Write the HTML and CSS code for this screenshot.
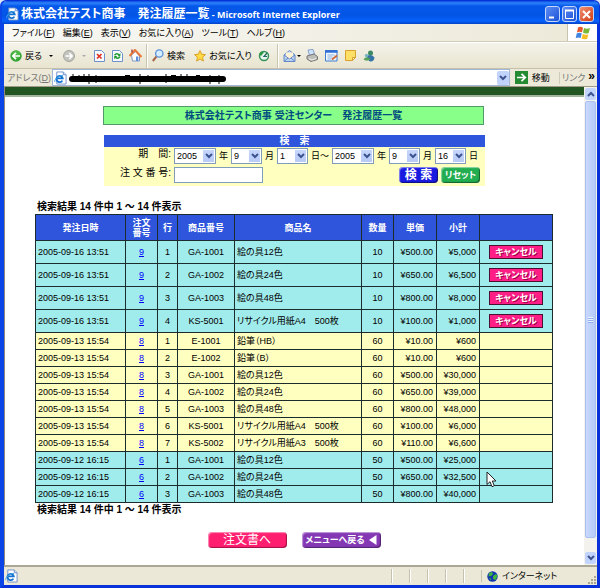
FILE: index.html
```html
<!DOCTYPE html>
<html lang="ja">
<head>
<meta charset="utf-8">
<meta name="viewport" content="width=device-width, initial-scale=1">
<title>株式会社テスト商事　発注履歴一覧</title>
<link rel="stylesheet" href="styles.css">
</head>
<body>
<svg width="0" height="0" class="defs" aria-hidden="true">
  <symbol id="ie" viewBox="0 0 14 14"><path d="M3 .5h7l3 3v10H3z" fill="#fff" stroke="#6f8fc8"/><path d="M10 .5v3h3" fill="#cfe0ff" stroke="#6f8fc8"/><path d="M9 9.8A3.4 3.4 0 1 1 9.4 7.4H3.2" fill="none" stroke="#1672cf" stroke-width="2"/><path d="M1 11.5C-.5 9 5 4 9.8 4.2" fill="none" stroke="#43a5ef"/></symbol>
  <symbol id="down" viewBox="0 0 8 6"><path d="M1 1l3 3 3-3" fill="none" stroke="#3c5390" stroke-width="2"/></symbol>
</svg>
<div class="window">
  <header class="titlebar">
    <svg class="icon" width="13" height="14"><use href="#ie"/></svg>
    <h1>株式会社テスト商事　発注履歴一覧<span> - Microsoft Internet Explorer</span></h1>
    <div class="winbtns">
      <button aria-label="最小化"><svg width="13" height="13" viewBox="0 0 13 13"><path d="M3 9.5h5" stroke="#fff" stroke-width="2"/></svg></button>
      <button aria-label="最大化"><svg width="13" height="13" viewBox="0 0 13 13"><path d="M2.500 2v8.500h8V2" fill="none" stroke="#fff"/><path d="M2 2.500h9" stroke="#fff" stroke-width="2"/></svg></button>
      <button class="close" aria-label="閉じる"><svg width="13" height="13" viewBox="0 0 13 13"><path d="M3 3l7 7M10 3l-7 7" stroke="#fff" stroke-width="2"/></svg></button>
    </div>
  </header>

  <div class="menubar">
    <nav>
      <a href="#">ファイル(<u>F</u>)</a><a href="#">編集(<u>E</u>)</a><a href="#">表示(<u>V</u>)</a><a href="#">お気に入り(<u>A</u>)</a><a href="#">ツール(<u>T</u>)</a><a href="#">ヘルプ(<u>H</u>)</a>
    </nav>
    <div class="flagbox"><svg width="16" height="14" viewBox="0 0 16 14"><path d="M3 1.500Q5.500 0 8 1.700L7 6.300Q4.500 5 2 6.500z" fill="#e8562b"/><path d="M9 2q3 1.500 6 0l-1.300 5q-3 1.300-5.700-.2z" fill="#78b938"/><path d="M1.700 7.500q2.500-1.500 5-.2L5.700 12q-2.500-1.300-5 .2z" fill="#3f84e0"/><path d="M7.700 8q2.700 1.500 5.700.2l-1.200 4.600q-3 1.200-5.600-.3z" fill="#f7be24"/></svg></div>
  </div>

  <div class="toolbar">
    <button><svg width="12" height="12" viewBox="0 0 12 12"><circle cx="6" cy="6" r="5.700" fill="#35a535"/><circle cx="6" cy="4.500" r="4" fill="#62c552" opacity=".6"/><path d="M10 6H3M6 2.800L2.800 6 6 9.200" fill="none" stroke="#fff" stroke-width="1.700"/></svg>戻る</button>
    <span class="caret"></span>
    <button aria-label="進む" class="fwd"><svg width="12" height="12" viewBox="0 0 12 12"><circle cx="6" cy="6" r="5.500" fill="#c4c4be" stroke="#a4a4a0"/><path d="M2.500 6H9M6.300 3L9.200 6 6.300 9" fill="none" stroke="#fff" stroke-width="1.500"/></svg></button>
    <span class="caret pale"></span>
    <div class="icons">
      <button aria-label="中止"><svg width="12" height="12" viewBox="0 0 12 12"><path d="M1.500.5h7l3 3v8h-10z" fill="#f6faff" stroke="#6d91cc"/><path d="M4 4l4.500 4.500M8.500 4L4 8.500" stroke="#e03020" stroke-width="1.700"/></svg></button>
      <button aria-label="更新"><svg width="12" height="12" viewBox="0 0 12 12"><path d="M1.500.5h7l3 3v8h-10z" fill="#f6faff" stroke="#6d91cc"/><path d="M3.500 5.200q2.500-3 4.500-.2M9 6.800q-2.500 3-4.500.2" fill="none" stroke="#1d9a2c" stroke-width="1.500"/><path d="M9.400 3v3.200H6.500zM3.200 9.200V6h3z" fill="#1d9a2c"/></svg></button>
      <button aria-label="ホーム"><svg width="13" height="13" viewBox="0 0 13 13"><path d="M2.500 6l4-3.500L10.500 7v5h-7z" fill="#fff" stroke="#7f97c0"/><path d="M7 7.500h2.300V12H7z" fill="#5d8fda"/><path d="M.5 7L6 1l6.500 7" fill="none" stroke="#e9793a" stroke-width="2"/><path d="M3 .5v3" stroke="#a44" stroke-width="1.500"/></svg></button>
    </div>
    <span class="sep"></span>
    <button><svg width="12" height="13" viewBox="0 0 12 13"><path d="M4.500 7.500L.8 12" stroke="#a5674a" stroke-width="2"/><circle cx="7.300" cy="4.500" r="3.700" fill="#d5eeff" stroke="#5b91d8" stroke-width="1.300"/></svg>検索</button>
    <button class="fav"><svg width="12" height="12" viewBox="0 0 12 12"><path d="M6 .6l1.600 3.600 3.900.4-2.900 2.600.8 3.900L6 9.100l-3.400 2 .8-3.900L.5 4.600l3.900-.4z" fill="#ffda42" stroke="#d89a20" stroke-width=".9"/></svg>お気に入り</button>
    <button aria-label="履歴" class="hist"><svg width="12" height="12" viewBox="0 0 12 12"><circle cx="6" cy="6" r="4.500" fill="#e6f5ed" stroke="#359259" stroke-width="1.500"/><path d="M1 4l2-2.500 3 1L3 6z" fill="#2c9a45"/><path d="M9 3L6 6.500h3" fill="none" stroke="#24675f" stroke-width="1.200"/></svg></button>
    <span class="sep"></span>
    <button aria-label="メール"><svg width="13" height="12" viewBox="0 0 13 12"><path d="M1 5l5.500-4.500L12 5v6.500H1z" fill="#b9d3f7" stroke="#6489c4"/><path d="M3 2.500h7v5l-3.500 2L3 7.500z" fill="#fff2d5"/><path d="M1 5l5.500 4L12 5M1 11.500L5 8M12 11.500L8 8" fill="none" stroke="#6489c4"/></svg></button>
    <span class="caret mail"></span>
    <div class="icons wide">
      <button aria-label="印刷"><svg width="12" height="13" viewBox="0 0 12 13"><path d="M2 1l5-.5L8.500 5l-5 1.500z" fill="#cfe4ff" stroke="#84a0cc"/><path d="M1 7l7-2 3.500 2.500v3L5 12.500 1 10z" fill="#bdbdb8" stroke="#777"/><path d="M3 9.500l3 1.500 4-1.500" fill="none" stroke="#f5f5f0"/></svg></button>
      <button aria-label="編集"><svg width="13" height="12" viewBox="0 0 13 12"><path d="M.5.500h11.500v10.500H.5z" fill="#eef6ff" stroke="#3e7fd0"/><path d="M0 1.500h12.500" stroke="#2f6fd6" stroke-width="2.500"/><path d="M2.500 5h7M2.500 7h5M2.500 9h4" stroke="#8eb0db"/><path d="M7 9.500l5-4" stroke="#cf6a35" stroke-width="1.800"/></svg></button>
      <button aria-label="メモ"><svg width="11" height="11" viewBox="0 0 11 11"><path d="M.5.500h10v7l-3 3h-7z" fill="#ffdf66" stroke="#d8a130"/><path d="M7.500 10.500v-3h3z" fill="#fff5bd" stroke="#d8a130"/></svg></button>
      <button aria-label="メッセンジャー"><svg width="12" height="12" viewBox="0 0 12 12"><circle cx="7.500" cy="3" r="2.500" fill="#3c8a63"/><path d="M4 6q4-2.500 7.500 1.500Q11 12 7 11.500 4 10 4 6z" fill="#3574a5"/><circle cx="3.500" cy="5.500" r="1.700" fill="#79b7c5"/><path d="M.5 9.500Q3 5.500 7.500 9 4 12 .5 9.500z" fill="#57a15d"/></svg></button>
    </div>
  </div>

  <div class="addressbar">
    <label for="addr">アドレス(<u>D</u>)</label>
    <div class="addr">
      <svg class="icon" width="13" height="14"><use href="#ie"/></svg>
      <svg class="stroke" width="160" height="12" viewBox="0 0 160 12"><path d="M4 7H155" stroke="#000" stroke-width="6" stroke-linecap="round"/><path d="M5 2v7M11 3v5M16 2v8M21 2v10M28 3v8M57 3.500h5M72 2v10M80 3v7M98 2v9M103 3.500h5M113 2v8M119 2v8M128 3.500h4M142 3v9M151 3v9" stroke="#000"/></svg>
      <input id="addr" type="text">
      <button class="drop" aria-label="履歴を開く"><svg width="8" height="6"><use href="#down"/></svg></button>
    </div>
    <button class="go"><svg width="13" height="13" viewBox="0 0 13 13"><path d="M0 0h13v13H0z" fill="#258b32"/><path d="M2 6.500h8M6.500 2.800l3.800 3.700-3.800 3.700" fill="none" stroke="#fff" stroke-width="1.700"/></svg>移動</button>
    <a class="links" href="#">リンク</a><b class="more">»</b>
  </div>

  <div class="viewport">
    <main>
      <div class="band"></div>
      <div class="page">
        <h2>株式会社テスト商事 受注センター　発注履歴一覧</h2>
        <form class="search" onsubmit="return false">
          <h3>検　索</h3>
          <div class="fields">
            <label for="y1">期　間:</label>
            <div class="dates">
              <span class="sel year"><select id="y1"><option>2005</option></select><svg><use href="#down"/></svg></span>年
              <span class="sel"><select aria-label="開始月"><option>9</option></select><svg><use href="#down"/></svg></span>月
              <span class="sel"><select aria-label="開始日"><option>1</option></select><svg><use href="#down"/></svg></span>日～
              <span class="sel year"><select aria-label="終了年"><option>2005</option></select><svg><use href="#down"/></svg></span>年
              <span class="sel"><select aria-label="終了月"><option>9</option></select><svg><use href="#down"/></svg></span>月
              <span class="sel"><select aria-label="終了日"><option>16</option></select><svg><use href="#down"/></svg></span>日
            </div>
            <label for="no">注 文 番 号:</label>
            <div class="number"><input id="no" type="text"><button class="pill blue">検 索</button><button class="pill green" type="reset">リセット</button></div>
          </div>
        </form>

        <section class="results">
          <p>検索結果 14 件中 1 ～ 14 件表示</p>
          <table>
            <colgroup><col class="w-date"><col class="w-s"><col class="w-row"><col class="w-code"><col class="w-name"><col class="w-s"><col class="w-price"><col class="w-price"><col class="w-act"></colgroup>
            <thead><tr><th>発注日時</th><th>注文<br>番号</th><th>行</th><th>商品番号</th><th>商品名</th><th>数量</th><th>単価</th><th>小計</th><th></th></tr></thead>
            <tbody class="aqua open">
              <tr><td>2005-09-16 13:51</td><td><a href="#">9</a></td><td>1</td><td>GA-1001</td><td>絵の具12色</td><td>10</td><td>¥500.00</td><td>¥5,000</td><td><button class="cancel">キャンセル</button></td></tr>
              <tr><td>2005-09-16 13:51</td><td><a href="#">9</a></td><td>2</td><td>GA-1002</td><td>絵の具24色</td><td>10</td><td>¥650.00</td><td>¥6,500</td><td><button class="cancel">キャンセル</button></td></tr>
              <tr><td>2005-09-16 13:51</td><td><a href="#">9</a></td><td>3</td><td>GA-1003</td><td>絵の具48色</td><td>10</td><td>¥800.00</td><td>¥8,000</td><td><button class="cancel">キャンセル</button></td></tr>
              <tr><td>2005-09-16 13:51</td><td><a href="#">9</a></td><td>4</td><td>KS-5001</td><td>リサイクル用紙A4　500枚</td><td>10</td><td>¥100.00</td><td>¥1,000</td><td><button class="cancel">キャンセル</button></td></tr>
            </tbody>
            <tbody class="cream">
              <tr><td>2005-09-13 15:54</td><td><a href="#">8</a></td><td>1</td><td>E-1001</td><td>鉛筆（HB）</td><td>60</td><td>¥10.00</td><td>¥600</td><td></td></tr>
              <tr><td>2005-09-13 15:54</td><td><a href="#">8</a></td><td>2</td><td>E-1002</td><td>鉛筆（B）</td><td>60</td><td>¥10.00</td><td>¥600</td><td></td></tr>
              <tr><td>2005-09-13 15:54</td><td><a href="#">8</a></td><td>3</td><td>GA-1001</td><td>絵の具12色</td><td>60</td><td>¥500.00</td><td>¥30,000</td><td></td></tr>
              <tr><td>2005-09-13 15:54</td><td><a href="#">8</a></td><td>4</td><td>GA-1002</td><td>絵の具24色</td><td>60</td><td>¥650.00</td><td>¥39,000</td><td></td></tr>
              <tr><td>2005-09-13 15:54</td><td><a href="#">8</a></td><td>5</td><td>GA-1003</td><td>絵の具48色</td><td>60</td><td>¥800.00</td><td>¥48,000</td><td></td></tr>
              <tr><td>2005-09-13 15:54</td><td><a href="#">8</a></td><td>6</td><td>KS-5001</td><td>リサイクル用紙A4　500枚</td><td>60</td><td>¥100.00</td><td>¥6,000</td><td></td></tr>
              <tr><td>2005-09-13 15:54</td><td><a href="#">8</a></td><td>7</td><td>KS-5002</td><td>リサイクル用紙A3　500枚</td><td>60</td><td>¥110.00</td><td>¥6,600</td><td></td></tr>
            </tbody>
            <tbody class="aqua">
              <tr><td>2005-09-12 16:15</td><td><a href="#">6</a></td><td>1</td><td>GA-1001</td><td>絵の具12色</td><td>50</td><td>¥500.00</td><td>¥25,000</td><td></td></tr>
              <tr><td>2005-09-12 16:15</td><td><a href="#">6</a></td><td>2</td><td>GA-1002</td><td>絵の具24色</td><td>50</td><td>¥650.00</td><td>¥32,500</td><td class="hover"><svg class="pointer" width="11" height="18" viewBox="0 0 11 18"><path d="M1 1v12.500l3-2.800 2 5 2.300-1-2-4.700H10z" fill="#fff" stroke="#222"/></svg></td></tr>
              <tr><td>2005-09-12 16:15</td><td><a href="#">6</a></td><td>3</td><td>GA-1003</td><td>絵の具48色</td><td>50</td><td>¥800.00</td><td>¥40,000</td><td></td></tr>
            </tbody>
          </table>
          <p>検索結果 14 件中 1 ～ 14 件表示</p>
        </section>
        <div class="actions"><button class="big pink">注文書へ</button><button class="big purple">メニューへ戻る<svg width="9" height="10" viewBox="0 0 9 10"><path d="M8.500 0v10L1 5z" fill="#fff"/></svg></button></div>
      </div>
    </main>
    <div class="scroll">
      <button aria-label="上へ"><svg class="flip" width="8" height="6"><use href="#down"/></svg></button>
      <div class="track"><div class="thumb"><i></i></div></div>
      <button aria-label="下へ"><svg width="8" height="6"><use href="#down"/></svg></button>
    </div>
  </div>

  <footer class="status">
    <svg class="icon" width="13" height="14"><use href="#ie"/></svg>
    <div class="cells"><i></i><i></i><i></i><i></i><i></i></div>
    <div class="zone"><svg width="11" height="11" viewBox="0 0 11 11"><circle cx="5.500" cy="5.500" r="5.200" fill="#1236b0"/><path d="M2 2l3-1 1 2-2 2-2.500.5zM6 5l3-2 1.500 2-2 4L6 8zM2 7l2 .500v2z" fill="#42b63c"/></svg>インターネット</div>
    <svg class="grip" width="9" height="9" viewBox="0 0 9 9"><path d="M7 1h2M4 4h2M7 4h2M1 7h2M4 7h2M7 7h2" stroke="#aaa58e" stroke-width="2"/></svg>
  </footer>
</div>
</body>
</html>
```

FILE: styles.css
```css
* { box-sizing: border-box; }
body {
  margin: 0;
  background: #dfe6f5;
  font: 9px/12px "Liberation Sans", "Noto Sans CJK JP", sans-serif;
  font-feature-settings: "palt";
  color: #000;
}
.defs { position: absolute; }
h1, h2, h3, p { margin: 0; font-weight: normal; }
button { font: inherit; font-feature-settings: inherit; color: inherit; border: 0; background: none; padding: 0; display: flex; align-items: center; justify-content: center; }
input, select { font: inherit; color: inherit; margin: 0; }
svg { display: block; flex: none; }
a { color: inherit; text-decoration: none; }

.window {
  min-height: 100vh;
  display: flex;
  flex-direction: column;
  border: solid #0831d9;
  border-width: 1px 3px 3px 4px;
  border-left-color: #0b45e8;
  border-radius: 6px 6px 0 0;
  background: #ece9d8;
}
.titlebar {
  height: 23px;
  margin: 0 -2px;
  padding: 3px 5px 0 4px;
  display: flex;
  align-items: center;
  gap: 2px;
  color: #fff;
  background: linear-gradient(#0a4be0, #2d83fb 2px, #0558ea 5px, #0355e6 15px, #0762fb 20px, #0343c8);
  border-radius: 5px 5px 0 0;
}
h1 { flex: 1; font-size: 12px; line-height: 16px; font-weight: bold; white-space: nowrap; }
h1 span { font: bold 9px/16px "Open Sans", sans-serif; }
.winbtns { display: flex; gap: 2px; }
.winbtns button { width: 15px; height: 16px; border: 1px solid #c5d6fb; border-radius: 3px; background: linear-gradient(135deg, #5d8cf5, #1c52d5); }
.winbtns .close { background: linear-gradient(135deg, #f09070, #d03c14); }

.menubar { display: flex; height: 18px; border-bottom: 1px solid #d0ccb8; background: linear-gradient(90deg, #f8f8f5, #ece9d8); }
nav { flex: 1; display: flex; gap: 8px; padding: 3px 8px; white-space: nowrap; }
.flagbox { width: 30px; background: #fff; border-left: 1px solid #c8c4b0; display: flex; align-items: center; justify-content: center; }

.toolbar { height: 27px; display: flex; align-items: center; padding: 0 6px; border-top: 1px solid #fff; border-bottom: 1px solid #c5c1ac; background: linear-gradient(#f4f3ea, #e8e4cf); white-space: nowrap; }
.toolbar button { gap: 3px; }
.caret { border: 2px solid transparent; border-top-color: #000; border-bottom: 0; margin: 0 10px 0 7px; }
.caret.pale { border-top-color: #aaa; margin: 0 7px; }
.caret.mail { margin: 0 5px 0 1px; }
.icons { display: flex; gap: 6px; align-items: center; }
.icons.wide { gap: 7px; }
.sep { width: 2px; height: 24px; margin: 0 4px; border-left: 1px solid #c8c4b0; border-right: 1px solid #fff; }
.fav { margin: 0 6px 0 9px; }
.hist { margin-right: 3px; }

.addressbar { height: 18px; display: flex; align-items: center; padding-left: 3px; border-bottom: 1px solid #9d9a87; background: #ece9d8; white-space: nowrap; color: #777; }
.addressbar label { width: 45px; }
.addr { flex: 1; height: 17px; display: flex; align-items: center; border: 1px solid #9fb6d6; background: #fff; padding-left: 1px; }
.addr .stroke { margin-left: 1px; }
.addr input { flex: 1; min-width: 0; border: 0; outline: 0; background: none; }
.drop { width: 12px; height: 14px; background: #c2d3fb; border-radius: 2px; }
.go { gap: 4px; color: #000; margin: 0 9px 0 5px; }
.links { border-left: 1px solid #cfcbb8; padding-left: 2px; }
.more { color: #000; font-size: 12px; margin: 0 2px 4px 3px; }

.viewport { flex: 1; display: flex; background: #fff; border-left: 1px solid #8d8a7c; }
main { flex: 1; min-width: 0; }
.band { height: 10px; background: #225522; border-bottom: 2px solid #a0b4a0; }
.page { padding: 9px 31px 0 30px; }
h2 {
  margin: 0 69px 10px 68px;
  height: 19px;
  border: 1px solid #4f9a68;
  background: #88ff88;
  color: #004c80;
  text-align: center;
  font-size: 10px;
  line-height: 17px;
  font-weight: bold;
}
.search { margin: 0 68px 0 69px; background: #ffffc0; height: 51px; }
h3 { background: #2f55dc; color: #fff; text-align: center; font-size: 10px; line-height: 12px; font-weight: bold; }
.fields { display: grid; grid-template-columns: 67px 1fr; column-gap: 3px; row-gap: 3px; padding-top: 1px; }
.fields label { text-align: right; font-size: 10px; }
.dates { display: flex; align-items: center; gap: 3px; height: 16px; white-space: nowrap; }
.sel { position: relative; width: 31px; height: 16px; }
.sel.year { width: 42px; }
.sel select { appearance: none; width: 100%; height: 100%; padding: 0 2px; border: 1px solid #7f9db9; border-radius: 0; background: linear-gradient(#c6d6fc, #b8cbf6) right 1px center / 11px 12px no-repeat #fff; display: block; }
.sel svg { position: absolute; right: 3px; top: 5px; width: 8px; height: 6px; pointer-events: none; }
.number { display: flex; height: 16px; padding-right: 5px; gap: 3px; }
.number input { width: 89px; height: 16px; border: 1px solid #7f9db9; padding: 0 2px; background: #fff; margin-right: auto; }
.pill { width: 39px; height: 16px; border-radius: 4px; color: #fff; box-shadow: inset 1px 1px 1px #ffffff80, inset -1px -1px 1px #00000070; }
.pill.blue { background: #1a1ae0; font-size: 12px; font-weight: bold; }
.pill.green { background: #22ad50; font-weight: bold; }

.results { padding-top: 14px; }
.results p { font-size: 10px; line-height: 13px; font-weight: bold; padding-left: 2px; }
table { width: 100%; table-layout: fixed; border-collapse: collapse; margin-top: 1px; }
.w-date { width: 90px; } .w-s { width: 32px; } .w-row { width: 20px; } .w-code { width: 57px; } .w-name { width: auto; } .w-price { width: 43px; } .w-act { width: 73px; }
th, td { border: 1px solid #1c2b2b; padding: 0 2px; text-align: center; white-space: nowrap; }
th { height: 26px; background: #2f55dc; color: #fff; line-height: 10px; }
td { height: 17px; line-height: 11px; }
.open td { height: 23px; }
.aqua { background: #a0ebeb; }
.cream { background: #ffffc0; }
td:nth-child(1), td:nth-child(5) { text-align: left; }
td:nth-child(7), td:nth-child(8) { text-align: right; padding-right: 3px; }
td a { color: #00f; text-decoration: underline; }
.cancel { width: 54px; height: 14px; margin: 0 auto; border: 1px solid #4a1030; background: #ff1e86; color: #fff; font-weight: bold; text-shadow: 1px 1px #a00048; line-height: 11px; }
.hover { position: relative; }
.pointer { position: absolute; left: 6px; top: 2px; }

.actions { display: flex; justify-content: center; gap: 15px; padding: 16px 0; }
.big { width: 79px; height: 16px; border-radius: 4px; color: #fff; gap: 3px; box-shadow: inset 1px 1px 1px #ffffff80, inset -1px -1px 1px #00000060; }
.pink { background: #ff1e70; font-size: 12px; }
.purple { background: #8438b4; font-weight: bold; }

.scroll { width: 13px; display: flex; flex-direction: column; background: #f3f2ec; padding: 1px; gap: 1px; }
.scroll button { height: 12px; background: #c3d4fc; border-radius: 2px; }
.flip { transform: rotate(180deg); }
.track { flex: 1; display: flex; padding-bottom: 13px; }
.thumb { flex: 1; background: linear-gradient(90deg, #c9d8fd, #b6cafa); border: 1px solid #aac0f0; border-radius: 2px; display: flex; align-items: center; justify-content: center; }
.thumb i { width: 5px; height: 6px; background: repeating-linear-gradient(#eef4ff 0 1px, #91acea 1px 2px); }

.status { height: 20px; display: flex; align-items: center; padding: 0 1px; border-top: 2px solid #aaa794; background: #ebe8d7; }
.cells { flex: 1; display: flex; justify-content: flex-end; }
.cells i { width: 18px; height: 14px; border-left: 1px solid #c6c2ae; box-shadow: inset 1px 0 #fff; }
.zone { display: flex; align-items: center; gap: 4px; width: 106px; padding-left: 5px; border-left: 1px solid #c6c2ae; }
.grip { align-self: flex-end; }
```
